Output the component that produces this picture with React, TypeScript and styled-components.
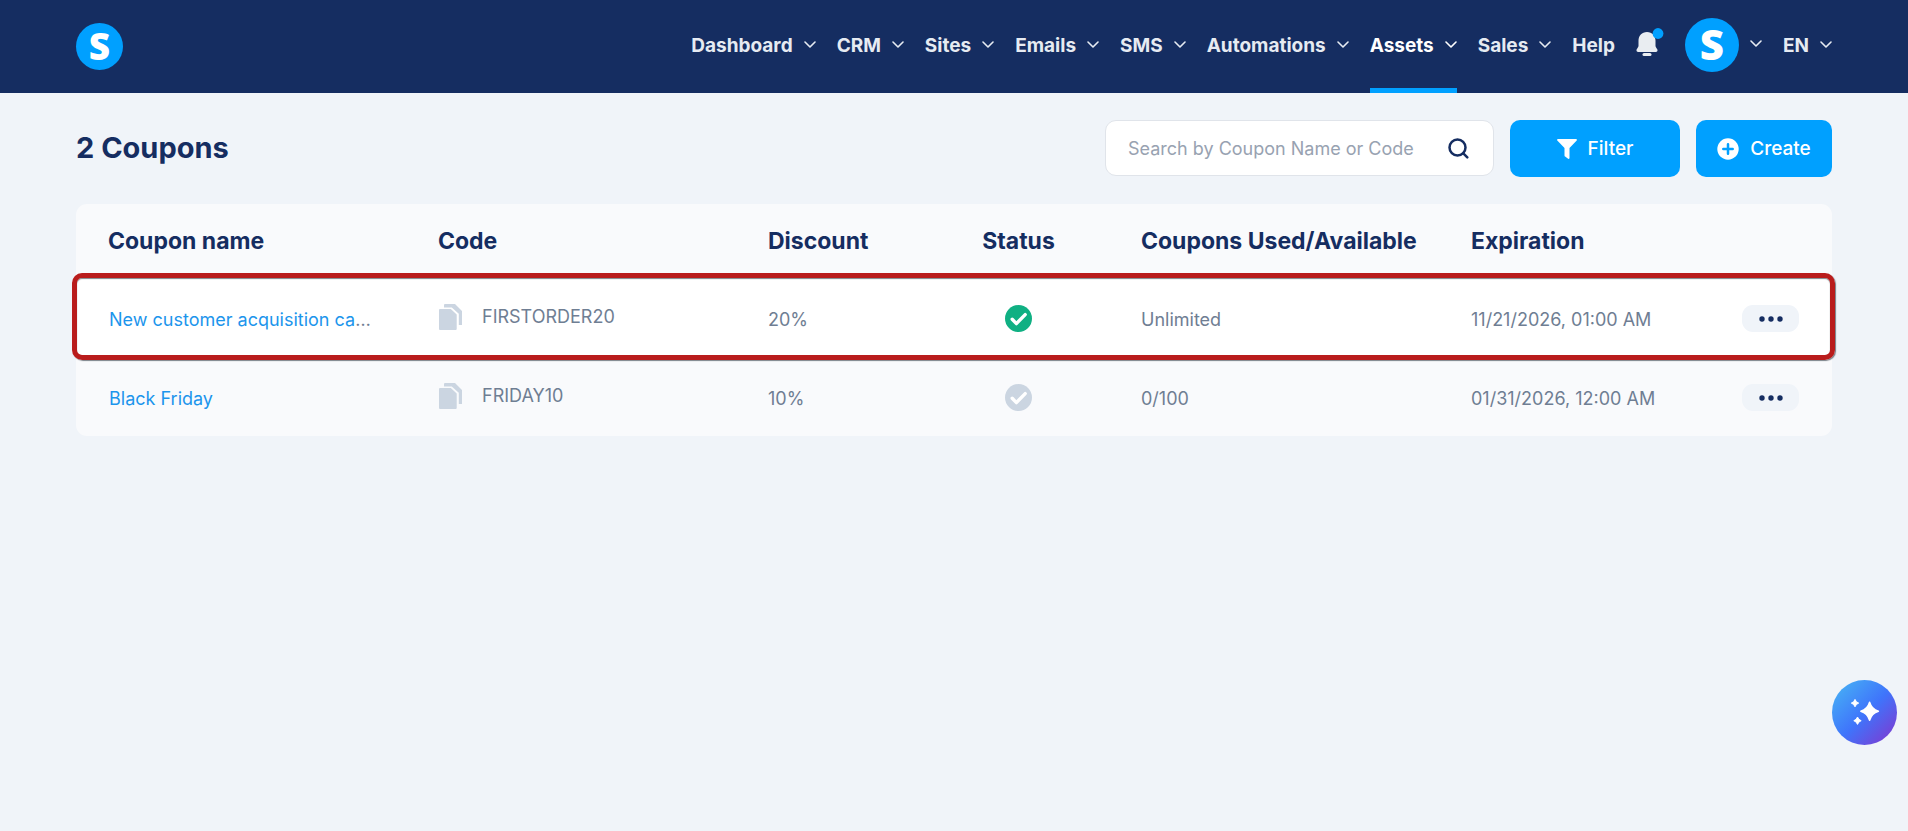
import React from 'react';
import styled, { createGlobalStyle } from 'styled-components';

const color = {
  navy: '#152d61',
  blue: '#00a0ff',
  link: '#1c95ec',
  text: '#6f7e93',
  muted: '#cbd5e1',
  page: '#f0f4f9',
  panel: '#f9fafc',
};

const GlobalStyle = createGlobalStyle`
  *, *::before, *::after { box-sizing: border-box; }
  body {
    margin: 0;
    min-height: 100vh;
    background: ${color.page};
    color: ${color.text};
    font-family: Inter, "Liberation Sans", sans-serif;
    font-size: 18px;
    line-height: 24px;
  }
  button, input { font: inherit; color: inherit; }
  button { border: 0; padding: 0; background: none; cursor: pointer; }
  a { text-decoration: none; }
  svg { display: block; flex-shrink: 0; }
`;

const Header = styled.header`
  display: flex;
  align-items: center;
  justify-content: space-between;
  height: 93px;
  padding: 0 76px;
  background: ${color.navy};
  color: #e6ebf2;
`;

const Badge = styled.span<{ $size: number }>`
  display: flex;
  align-items: center;
  justify-content: center;
  flex-shrink: 0;
  width: ${(p) => p.$size}px;
  height: ${(p) => p.$size}px;
  padding-bottom: 2px;
  border-radius: 50%;
  background: ${color.blue};
  color: #fff;
  font-family: "Open Sans", "Noto Sans", sans-serif;
  font-weight: 800;
  font-size: ${(p) => (p.$size > 50 ? 42 : 37)}px;
  line-height: 1;
`;

const HomeLink = styled.a`
  display: flex;
`;

const Nav = styled.nav`
  display: flex;
  align-items: center;
  gap: 21px;
  height: 100%;
  font-size: 19px;
  font-weight: 700;
`;

const NavButton = styled.button<{ $active?: boolean }>`
  display: flex;
  align-items: center;
  gap: 11px;
  height: 100%;
  padding-bottom: 2px;
  color: ${(p) => (p.$active ? '#fff' : 'inherit')};
  box-shadow: ${(p) => (p.$active ? `inset 0 -5px ${color.blue}` : 'none')};

  > svg { margin-bottom: 2px; }
`;

const AccountButton = styled(NavButton)`
  padding-bottom: 4px;
`;

const NavLink = styled.a`
  padding-bottom: 2px;
  color: inherit;
`;

const BellButton = styled.button`
  width: 28px;
  height: 32px;
  margin-bottom: 10px;
`;

const Page = styled.main`
  padding: 27px 76px;
`;

const Toolbar = styled.div`
  display: flex;
  align-items: flex-start;
  gap: 16px;
  margin-bottom: 27px;
`;

const Title = styled.h1`
  flex: 1;
  margin: 0;
  color: ${color.navy};
  font-size: 29px;
  line-height: 56px;
  font-weight: 700;
`;

const SearchBox = styled.form`
  display: flex;
  align-items: center;
  width: 389px;
  height: 56px;
  padding: 0 24px 0 22px;
  border: 1px solid #e0e4ea;
  border-radius: 11px;
  background: #fff;
`;

const SearchInput = styled.input`
  flex: 1;
  min-width: 0;
  padding: 2px 0 0;
  border: 0;
  outline: 0;
  background: none;
  &::placeholder { color: #98a2b1; opacity: 1; }
`;

const PrimaryButton = styled.button<{ $width: number }>`
  display: flex;
  align-items: center;
  justify-content: center;
  gap: 11px;
  width: ${(p) => p.$width}px;
  height: 57px;
  border-radius: 10px;
  background: ${color.blue};
  color: #fff;
  font-size: 19px;
  font-weight: 500;
`;

const Table = styled.table`
  width: 100%;
  table-layout: fixed;
  border-collapse: separate;
  border-spacing: 0;
  border-radius: 11px;
  background: ${color.panel};
`;

const HeadCell = styled.th<{ $center?: boolean }>`
  height: 74px;
  padding: 0;
  color: ${color.navy};
  font-size: 23px;
  line-height: 28px;
  font-weight: 700;
  white-space: nowrap;
  text-align: ${(p) => (p.$center ? 'center' : 'left')};
  &:first-child { padding-left: 32px; }
`;

const Row = styled.tr<{ $highlight?: boolean }>`
  position: relative;
  background: ${(p) => (p.$highlight ? '#fff' : 'transparent')};
  &::after {
    content: ${(p) => (p.$highlight ? '""' : 'none')};
    position: absolute;
    inset: -5px -3px -3px -4px;
    border: 5px solid #b91c1c;
    border-radius: 10px;
    box-shadow: 1px 1px 1px rgba(40, 50, 60, 0.6), inset 0 1px 1px rgba(40, 50, 60, 0.6);
    pointer-events: none;
  }
`;

const Cell = styled.td`
  height: 79px;
  padding: 5px 0 0;
  white-space: nowrap;
`;

const NameCell = styled(Cell)`
  padding-left: 33px;
  padding-right: 59px;
  overflow: hidden;
  text-overflow: ellipsis;
`;

const NameLink = styled.a`
  color: ${color.link};
`;

const CodeCell = styled(Cell)`
  padding: 0 0 2px;
`;

const Code = styled.div`
  display: flex;
  align-items: center;
  gap: 19px;
`;

const StatusCell = styled(Cell)`
  padding: 2px 0 0;
`;

const StatusIcon = styled.svg`
  margin: 0 auto;
`;

const ActionCell = styled(Cell)`
  padding: 2px 33px 0 0;
`;

const MoreButton = styled.button`
  display: flex;
  align-items: center;
  justify-content: center;
  width: 57px;
  height: 27px;
  margin-left: auto;
  border-radius: 11px;
  background: ${color.page};
`;

const AssistantButton = styled.button`
  position: fixed;
  right: 11px;
  bottom: 86px;
  width: 65px;
  height: 65px;
  border-radius: 50%;
  background: linear-gradient(135deg, #46aef5 8%, #3f74fb 52%, #8038d0 96%);
`;

const Chevron = () => (
  <svg width="12" height="7" viewBox="0 0 12 7" fill="none" stroke="currentColor" strokeWidth="1.6" strokeLinecap="round" strokeLinejoin="round" aria-hidden="true">
    <path d="M1 1l5 5 5-5" />
  </svg>
);

const Bell = () => (
  <svg width="28" height="32" viewBox="0 0 28 32" aria-hidden="true">
    <path d="M11 6c-5.200 0-8.500 4-8.500 8.600v5.400c0 1-1.400 2.300-1.900 3.600-.4 1.300.2 2.400 1.600 2.400h17.600c1.400 0 2-1.100 1.600-2.400-.5-1.300-1.900-2.600-1.900-3.600v-5.400C19.500 10 16.200 6 11 6z" fill="#e9edf1" />
    <rect x="6.500" y="27" width="9" height="3" rx="1.500" fill="#e9edf1" />
    <circle cx="22" cy="7.500" r="5.400" fill={color.blue} />
  </svg>
);

const SearchIcon = () => (
  <svg width="21" height="21" viewBox="0 0 21 21" fill="none" stroke={color.navy} strokeWidth="2.500" strokeLinecap="round" aria-hidden="true">
    <circle cx="9.500" cy="9.500" r="8" />
    <path d="M15.300 15.300l4 4" />
  </svg>
);

const FunnelIcon = () => (
  <svg width="20" height="20" viewBox="0 0 20 20" fill="currentColor" aria-hidden="true">
    <path d="M1 0h18a.9.900 0 0 1 .7 1.500L12.500 9v10a.9.900 0 0 1-1.400.8l-3-2.200a1.500 1.500 0 0 1-.6-1.200V9L.3 1.500A.9.900 0 0 1 1 0z" />
  </svg>
);

const PlusIcon = () => (
  <svg width="22" height="22" viewBox="0 0 22 22" aria-hidden="true">
    <circle cx="11" cy="11" r="10.700" fill="#fff" />
    <path d="M11 6.300v9.400M6.300 11h9.400" stroke={color.blue} strokeWidth="2.500" strokeLinecap="round" />
  </svg>
);

const CopyIcon = () => (
  <svg width="25" height="26" viewBox="-1 0 25 26" fill={color.muted} aria-hidden="true">
    <path d="M6 0h10l7 7v14h-3.200V9.800L12.800 3.500H5V1a1 1 0 0 1 1-1z" />
    <path d="M1 5h10.800l5.900 5.500V25a1 1 0 0 1-1 1H1a1 1 0 0 1-1-1V6a1 1 0 0 1 1-1z" />
  </svg>
);

const Status = ({ active }: { active: boolean }) => (
  <StatusIcon width="27" height="27" viewBox="0 0 27 27" role="img" aria-label={active ? 'Active' : 'Inactive'}>
    <circle cx="13.500" cy="13.500" r="13.500" fill={active ? '#10b083' : color.muted} />
    <path d="M7.200 14.300l4.200 4.300 8.800-9" fill="none" stroke="#fff" strokeWidth="3.400" strokeLinecap="round" strokeLinejoin="round" />
  </StatusIcon>
);

const Dots = () => (
  <svg width="24" height="6" viewBox="0 0 24 6" fill={color.navy} aria-hidden="true">
    <circle cx="3" cy="3" r="2.700" />
    <circle cx="12" cy="3" r="2.700" />
    <circle cx="21" cy="3" r="2.700" />
  </svg>
);

const Sparkles = () => (
  <svg width="65" height="65" viewBox="0 0 65 65" fill="#fff" stroke="#fff" strokeLinejoin="round" aria-hidden="true">
    <path strokeWidth="1.500" d="M37.600 22.200q2 7 8.800 9-6.800 2-8.800 9-2-7-8.800-9 6.800-2 8.800-9z" />
    <path d="M23 19.400q.9 2.900 3.700 3.700-2.800.9-3.700 3.700-.9-2.800-3.700-3.700 2.800-.8 3.700-3.700zM25.500 37q.9 2.900 3.700 3.700-2.800.9-3.700 3.700-.9-2.800-3.700-3.700 2.800-.8 3.700-3.700z" />
  </svg>
);

const menus = ['Dashboard', 'CRM', 'Sites', 'Emails', 'SMS', 'Automations', 'Assets', 'Sales'];

const columnWidths = [362, 330, 128, 245, 330, 221, 140];

const coupons = [
  { name: 'New customer acquisition campaign', code: 'FIRSTORDER20', discount: '20%', active: true, used: 'Unlimited', expires: '11/21/2026, 01:00 AM', highlight: true },
  { name: 'Black Friday', code: 'FRIDAY10', discount: '10%', active: false, used: '0/100', expires: '01/31/2026, 12:00 AM', highlight: false },
];

export default function App() {
  return (
    <>
      <GlobalStyle />
      <Header>
        <HomeLink href="#home" aria-label="Home">
          <Badge $size={47}>S</Badge>
        </HomeLink>
        <Nav>
          {menus.map((menu) => (
            <NavButton key={menu} $active={menu === 'Assets'} aria-haspopup="menu">
              {menu}
              <Chevron />
            </NavButton>
          ))}
          <NavLink href="#help">Help</NavLink>
          <BellButton aria-label="Notifications">
            <Bell />
          </BellButton>
          <AccountButton aria-label="Account" aria-haspopup="menu">
            <Badge $size={54}>S</Badge>
            <Chevron />
          </AccountButton>
          <NavButton aria-haspopup="menu">
            EN
            <Chevron />
          </NavButton>
        </Nav>
      </Header>
      <Page>
        <Toolbar>
          <Title>2 Coupons</Title>
          <SearchBox role="search">
            <SearchInput type="text" aria-label="Search coupons" placeholder="Search by Coupon Name or Code" />
            <button type="button" aria-label="Search">
              <SearchIcon />
            </button>
          </SearchBox>
          <PrimaryButton $width={170}>
            <FunnelIcon />
            Filter
          </PrimaryButton>
          <PrimaryButton $width={136}>
            <PlusIcon />
            Create
          </PrimaryButton>
        </Toolbar>
        <Table>
          <colgroup>
            {columnWidths.map((width, i) => (
              <col key={i} width={width} />
            ))}
          </colgroup>
          <thead>
            <tr>
              <HeadCell scope="col">Coupon name</HeadCell>
              <HeadCell scope="col">Code</HeadCell>
              <HeadCell scope="col">Discount</HeadCell>
              <HeadCell scope="col" $center>Status</HeadCell>
              <HeadCell scope="col">Coupons Used/Available</HeadCell>
              <HeadCell scope="col">Expiration</HeadCell>
              <HeadCell as="td" />
            </tr>
          </thead>
          <tbody>
            {coupons.map((coupon) => (
              <Row key={coupon.code} $highlight={coupon.highlight}>
                <NameCell>
                  <NameLink href="#coupon">{coupon.name}</NameLink>
                </NameCell>
                <CodeCell>
                  <Code>
                    <button aria-label={`Copy ${coupon.code}`}>
                      <CopyIcon />
                    </button>
                    {coupon.code}
                  </Code>
                </CodeCell>
                <Cell>{coupon.discount}</Cell>
                <StatusCell>
                  <Status active={coupon.active} />
                </StatusCell>
                <Cell>{coupon.used}</Cell>
                <Cell>{coupon.expires}</Cell>
                <ActionCell>
                  <MoreButton aria-label={`More actions for ${coupon.name}`}>
                    <Dots />
                  </MoreButton>
                </ActionCell>
              </Row>
            ))}
          </tbody>
        </Table>
      </Page>
      <AssistantButton aria-label="Open assistant">
        <Sparkles />
      </AssistantButton>
    </>
  );
}
